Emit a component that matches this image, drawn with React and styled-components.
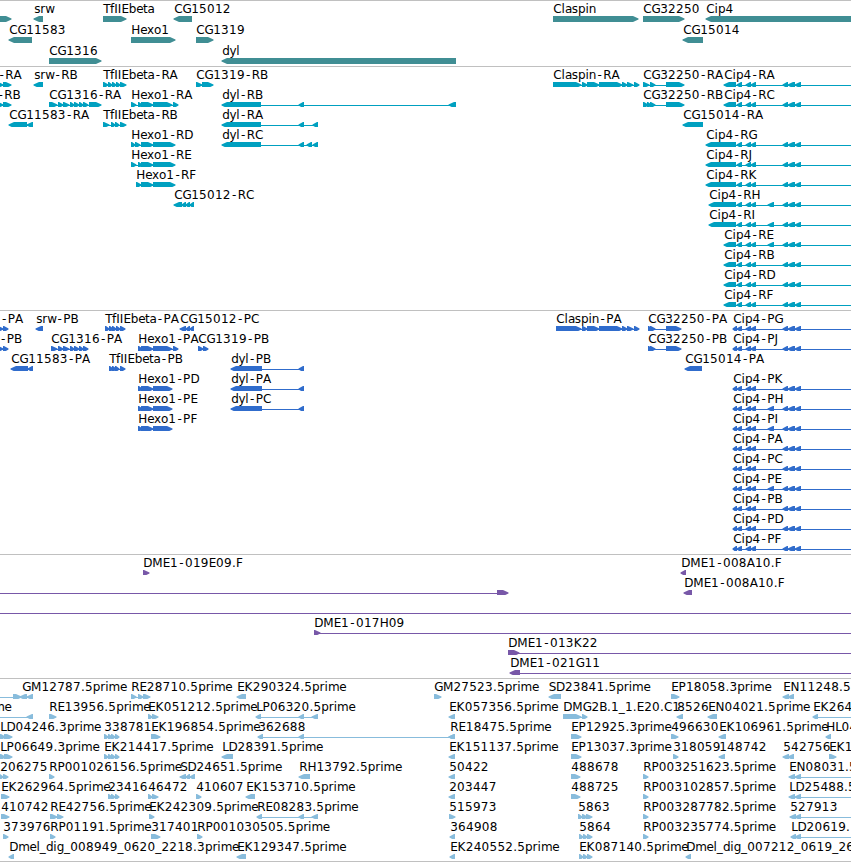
import React from 'react';
import styled, { createGlobalStyle } from 'styled-components';

const GlobalStyle = createGlobalStyle`
  body {
    margin: 0;
    background: #fff;
    overflow: hidden;
  }
`;

const Browser = styled.main`
  display: flex;
  flex-direction: column;
  width: 851px;
  height: 862px;
  box-sizing: border-box;
  border-bottom: 1px solid #c0c0c0;
  overflow: hidden;
`;

const TrackPanel = styled.section`
  display: flex;
  flex-direction: column;
  flex: none;
  box-sizing: border-box;
  border-top: 1px solid #c0c0c0;
  padding-bottom: ${props => props.$gap}px;
  color: ${props => props.$color};
`;

const Lane = styled.svg`
  display: block;
  flex: none;
  width: 851px;
  height: ${props => props.$height}px;
  overflow: hidden;
`;

const Label = styled.text`
  font-family: "DejaVu Sans", sans-serif;
  font-size: 12px;
  font-kerning: none;
  fill: #000;
`;

const Exon = styled.polygon`
  fill: currentColor;
`;

const Intron = styled.rect`
  fill: currentColor;
  shape-rendering: crispEdges;
`;

// pixel advance of each label character
const ADVANCE = {
  A: 8.2, B: 7.6, C: 8.3, D: 9, E: 7.4, F: 7, G: 8.7, H: 9, I: 3.6, J: 3.6,
  K: 8.2, L: 6.4, M: 10.5, N: 9, P: 7.3, R: 8.2, S: 7.2, T: 6.9,
  a: 6.9, b: 7.4, d: 7.4, e: 6.9, f: 4.1, g: 7.4, i: 3.4, l: 3.4, m: 11.3,
  n: 7.4, o: 7.3, p: 7.5, r: 4.9, s: 6.1, t: 4.4, w: 9, x: 6.8, y: 6.7,
  '-': 7, '.': 4, _: 6.1,
};

const charPositions = (name, start) => {
  let x = start;
  return name.split('').map((c) => {
    // the hyphen sits in the middle of its wide slot
    const at = c === '-' ? x + 1.3 : x;
    x += ADVANCE[c] || 7.9;
    return at.toFixed(1);
  }).join(' ');
};

const END = 860;
const TOP = 15;

// feature builders: exons are flat lists of start, end
const fwd = (name, exons, opts) => ({ name, exons, dir: 1, ...opts });
const rev = (name, exons, opts) => ({ name, exons, dir: -1, ...opts });

// bar with a slightly blunt head, 6px tall
const arrow = (a, b, dir) => {
  const head = Math.min(6, b - a);
  const tip = dir > 0 ? b + 0.5 : a - 0.5;
  const neck = dir > 0 ? b - head : a + head;
  const tail = dir > 0 ? a : b;
  return [
    [tail, TOP], [neck, TOP], [neck + dir, TOP],
    [tip, TOP + 2.4], [tip, TOP + 3.6],
    [neck + dir, TOP + 6], [tail, TOP + 6],
  ].map(p => p.join(',')).join(' ');
};

const Feature = ({ feature }) => {
  const { name, exons, dir, from, to, at } = feature;
  const start = from !== undefined ? from : exons[0];
  const end = to !== undefined ? to : exons[exons.length - 1];
  const pairs = [];
  for (let i = 0; i < exons.length; i += 2) pairs.push([exons[i], exons[i + 1]]);
  const pad = dir > 0 ? 0 : 2;
  return (
    <g>
      {(pairs.length !== 1 || end - start > exons[1] - exons[0]) && (
        <Intron x={start + pad} y={TOP + 3} width={end - start - 2} height="1" />
      )}
      {pairs.map(([a, b]) => (
        <Exon key={a} points={arrow(a, b, dir)} />
      ))}
      {name && (
        <Label x={charPositions(name, (at !== undefined ? at : start) + 0.2)} y="12">
          {name}
        </Label>
      )}
    </g>
  );
};

const Track = ({ color, rows, laneHeight = 20, gap = 3 }) => (
  <TrackPanel $color={color} $gap={gap}>
    {rows.map((row, i) => (
      <Lane key={i} $height={laneHeight}>
        {row.map((feature, j) => <Feature key={j} feature={feature} />)}
      </Lane>
    ))}
  </TrackPanel>
);

const cip4Tail = [746, 751, 751, 756, 783, 788, 788, 795, 795, 801];
const cip4TailExtra = [746, 751, 751, 756, 768, 774, 783, 788, 788, 795, 795, 801];
const cip4R = (id, start, extra) => rev(
  `Cip4-${id}`,
  [start, 736, 737, 742, ...(extra ? cip4TailExtra : cip4Tail)],
  { to: END },
);
const cip4P = (id, extra) => rev(
  `Cip4-${id}`,
  [733, 737, 737, 742, ...(extra ? cip4TailExtra : cip4Tail)],
  { to: END },
);

const genes = [
  [
    fwd('', [-10, 11]),
    rev('srw', [34, 43]),
    fwd('TfIIEbeta', [103, 126]),
    rev('CG15012', [174, 192]),
    fwd('Claspin', [553, 638]),
    fwd('CG32250', [643, 684]),
    rev('Cip4', [706, END]),
  ],
  [
    rev('CG11583', [9, 32]),
    fwd('Hexo1', [131, 175]),
    fwd('CG1319', [196, 213]),
    rev('CG15014', [683, 703]),
  ],
  [
    fwd('CG1316', [49, 101]),
    rev('dyl', [222, 456]),
  ],
];

const transcripts = [
  [
    fwd('-RA', [-4, 3, 3, 11], { at: -2 }),
    rev('srw-RB', [34, 43]),
    fwd('TfIIEbeta-RA', [103, 108, 108, 112, 112, 116, 116, 120, 120, 126]),
    fwd('CG1319-RB', [196, 202, 202, 213]),
    fwd('Claspin-RA', [553, 581, 582, 587, 587, 599, 599, 622, 622, 627, 627, 633, 634, 639]),
    fwd('CG32250-RA', [643, 649, 650, 655, 666, 684]),
    cip4R('RA', 724),
  ],
  [
    fwd('-RB', [-4, 3, 3, 11], { at: -3 }),
    fwd('CG1316-RA', [49, 57, 58, 63, 63, 69, 70, 74, 74, 79, 79, 83, 83, 88, 89, 101]),
    fwd('Hexo1-RA', [131, 136, 138, 142, 141, 153, 153, 172, 173, 178]),
    rev('dyl-RB', [222, 261, 299, 304, 449, 456]),
    fwd('CG32250-RB', [643, 648, 647, 651, 650, 655, 666, 684]),
    cip4R('RC', 724),
  ],
  [
    rev('CG11583-RA', [9, 27, 27, 33]),
    fwd('TfIIEbeta-RB', [103, 109, 111, 115, 115, 119, 120, 126]),
    rev('dyl-RA', [222, 261, 299, 304, 313, 318]),
    rev('CG15014-RA', [683, 703]),
  ],
  [
    fwd('Hexo1-RD', [131, 135, 135, 140, 141, 153, 153, 175]),
    rev('dyl-RC', [222, 261, 299, 304, 307, 312, 313, 318]),
    cip4R('RG', 706),
  ],
  [
    fwd('Hexo1-RE', [131, 136, 138, 142, 141, 153, 153, 175]),
    cip4R('RJ', 706),
  ],
  [
    fwd('Hexo1-RF', [136, 141, 141, 153, 153, 175]),
    cip4R('RK', 706),
  ],
  [
    rev('CG15012-RC', [174, 182, 182, 186, 186, 190, 190, 194]),
    cip4R('RH', 709, true),
  ],
  [cip4R('RI', 709, true)],
  [cip4R('RE', 724, true)],
  [cip4R('RB', 724)],
  [cip4R('RD', 724)],
  [cip4R('RF', 724)],
];

const proteins = [
  [
    fwd('-PA', [-4, 3, 3, 8], { at: 0.6 }),
    rev('srw-PB', [36, 43]),
    fwd('TfIIEbeta-PA', [105, 109, 109, 113, 112, 116, 116, 120, 120, 125]),
    rev('CG15012-PC', [180, 186, 186, 190, 190, 194]),
    fwd('Claspin-PA', [556, 581, 582, 587, 587, 599, 599, 622, 622, 627, 627, 633, 634, 639]),
    fwd('CG32250-PA', [648, 652, 650, 655, 666, 681]),
    cip4P('PG'),
  ],
  [
    fwd('-PB', [-4, 3, 3, 8], { at: -0.4 }),
    fwd('CG1316-PA', [51, 57, 58, 63, 63, 69, 70, 74, 74, 79, 79, 83, 83, 88]),
    fwd('Hexo1-PA', [138, 142, 141, 153, 153, 172, 173, 178]),
    fwd('CG1319-PB', [198, 203, 203, 208]),
    fwd('CG32250-PB', [648, 652, 650, 655, 666, 681]),
    cip4P('PJ'),
  ],
  [
    rev('CG11583-PA', [11, 28, 28, 33]),
    fwd('TfIIEbeta-PB', [109, 113, 112, 116, 115, 119, 120, 125]),
    rev('dyl-PB', [231, 262, 299, 304]),
    rev('CG15014-PA', [685, 702]),
  ],
  [
    fwd('Hexo1-PD', [138, 142, 141, 153, 153, 172]),
    rev('dyl-PA', [231, 262, 299, 304]),
    cip4P('PK'),
  ],
  [
    fwd('Hexo1-PE', [138, 142, 141, 153, 153, 172]),
    rev('dyl-PC', [231, 262, 299, 304]),
    cip4P('PH', true),
  ],
  [
    fwd('Hexo1-PF', [138, 142, 141, 153, 153, 172]),
    cip4P('PI', true),
  ],
  [cip4P('PA')],
  [cip4P('PC')],
  [cip4P('PE', true)],
  [cip4P('PB')],
  [cip4P('PD')],
  [cip4P('PF')],
];

const clones = [
  [
    fwd('DME1-019E09.F', [143, 149]),
    rev('DME1-008A10.F', [681, 686]),
  ],
  [
    fwd('', [497, 508], { from: -10 }),
    rev('DME1-008A10.F', [684, 692]),
  ],
  [fwd('', [], { from: -10, to: END })],
  [fwd('DME1-017H09', [314, 320], { to: END })],
  [fwd('DME1-013K22', [508, 519], { to: END })],
  [rev('DME1-021G11', [510, 520], { to: END })],
];

const ests = [
  [
    fwd('', [13, 21], { from: -10 }),
    rev('GM12787.5prime', [20, 27, 27, 33], { at: 22 }),
    fwd('RE28710.5prime', [131, 136, 138, 143, 143, 150]),
    rev('EK290324.5prime', [237, 246]),
    fwd('GM27523.5prime', [434, 441]),
    rev('SD23841.5prime', [549, 561], { at: 548.5 }),
    fwd('EP18058.3prime', [671, 679]),
    rev('EN11248.5prime', [783, 789, 788, 794]),
  ],
  [
    rev('me', [27, 33], { from: -10, at: -7 }),
    fwd('RE13956.5prime', [49, 56]),
    fwd('EK051212.5prime', [148, 152, 152, 158]),
    rev('LP06320.5prime', [256, 261, 299, 304, 312, 318]),
    rev('EK057356.5prime', [449, 455]),
    fwd('DMG2B.1_1.E20.C1', [563, 581, 582, 587]),
    rev('8526', [677, 683]),
    rev('EN04021.5prime', [708, 717]),
    rev('EK264', [813, 818], { to: END }),
  ],
  [
    fwd('LD04246.3prime', [0, 5, 4, 12]),
    fwd('338781', [104, 108, 108, 112, 111, 115, 115, 119]),
    fwd('EK196854.5prime', [151, 160]),
    rev('362688', [258, 263, 299, 304, 449, 455]),
    rev('RE18475.5prime', [449, 455], { at: 450 }),
    fwd('EP12925.3prime', [571, 581]),
    fwd('496630', [671, 678]),
    rev('EK106961.5prime', [719, 726]),
    rev('HL04', [826, 831]),
  ],
  [
    fwd('LP06649.3prime', [0, 5, 4, 12]),
    fwd('EK214417.5prime', [104, 108, 108, 112, 111, 115, 115, 119]),
    rev('LD28391.5prime', [222, 233]),
    rev('EK151137.5prime', [449, 455]),
    fwd('EP13037.3prime', [571, 581]),
    fwd('318059', [673, 678]),
    rev('148742', [719, 725]),
    rev('542756', [783, 789, 788, 794]),
    fwd('EK1', [829, 836]),
  ],
  [
    fwd('206275', [-1, 3, 3, 8], { at: 0 }),
    fwd('RP001026156.5prime', [49, 54]),
    rev('SD24651.5prime', [180, 186, 186, 190, 190, 195]),
    rev('RH13792.5prime', [299, 310]),
    rev('50422', [449, 455]),
    fwd('488678', [571, 580]),
    fwd('RP003251623.5prime', [643, 648]),
    rev('EN08031.5', [789, 795, 795, 801], { to: END }),
  ],
  [
    fwd('EK262964.5prime', [1, 9]),
    fwd('23416', [108, 112, 111, 115, 115, 119]),
    fwd('46472', [148, 152, 152, 158]),
    fwd('410607', [196, 201]),
    rev('EK153710.5prime', [246, 255]),
    rev('203447', [449, 455]),
    fwd('488725', [571, 580]),
    fwd('RP003102857.5prime', [643, 648]),
    rev('LD25488.5', [789, 795, 795, 801], { to: END }),
  ],
  [
    fwd('410742', [1, 9]),
    fwd('RE42756.5prime', [50, 57, 57, 63]),
    fwd('EK242309.5prime', [149, 154]),
    rev('RE08283.5prime', [257, 262, 299, 304, 312, 318]),
    fwd('515973', [449, 455]),
    fwd('5863', [578, 582, 582, 587, 586, 592]),
    fwd('RP003287782.5prime', [643, 648]),
    rev('527913', [790, 796, 795, 801], { to: END }),
  ],
  [
    fwd('373976', [3, 8]),
    fwd('RP01191.5prime', [50, 55]),
    fwd('317401', [151, 160]),
    fwd('RP001030505.5prime', [197, 202]),
    rev('364908', [450, 455]),
    fwd('5864', [579, 583, 583, 587, 587, 592]),
    fwd('RP003235774.5prime', [643, 648]),
    rev('LD20619.', [791, 796, 795, 801], { to: END }),
  ],
  [
    rev('Dmel_dig_008949_0620_2218.3prime', [9, 14]),
    rev('EK129347.5prime', [237, 246]),
    rev('EK240552.5prime', [450, 455]),
    fwd('EK087140.5prime', [579, 583, 583, 587, 587, 592]),
    rev('Dmel_dig_007212_0619_26', [686, 691]),
  ],
];

const App = () => (
  <>
    <GlobalStyle />
    <Browser>
      <Track color="#408e94" rows={genes} laneHeight={21} gap={2} />
      <Track color="#00a0c0" rows={transcripts} />
      <Track color="#306ccc" rows={proteins} />
      <Track color="#7858a8" rows={clones} />
      <Track color="#88bcdc" rows={ests} gap={2} />
    </Browser>
  </>
);

export default App;
